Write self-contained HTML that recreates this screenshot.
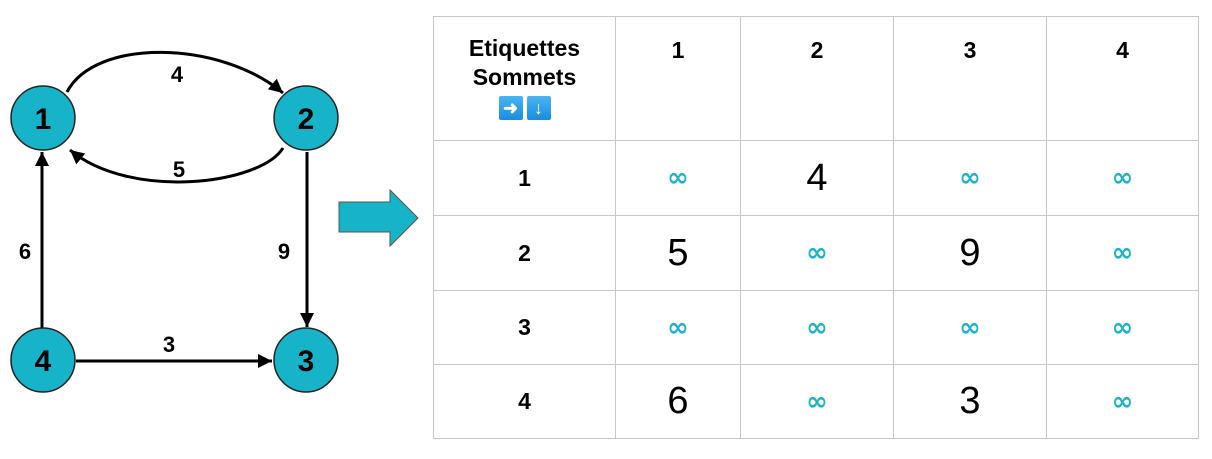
<!DOCTYPE html>
<html><head><style>
body{margin:0;width:1212px;height:459px;background:#fff;overflow:hidden;position:relative;font-family:"Liberation Sans",sans-serif}
svg{position:absolute;left:0;top:0}
.t{position:absolute;left:433px;top:16px;border-collapse:collapse}
.t td{border:1.5px solid #c8c8c8;text-align:center;padding:0}
.h{font-weight:bold;font-size:23px}
.i{color:#1bb3c9;font-size:26px;font-family:"DejaVu Sans",sans-serif;font-weight:bold}
.n{font-size:38px}
.b{display:inline-block;width:24px;height:24px;background:linear-gradient(#4ab4f0,#1a8de0);border-radius:2px;color:#fff;font-size:18px;line-height:24px;margin:2px}
</style></head><body>
<svg width="1212" height="459">
<defs>
<marker id="m" viewBox="0 0 10 10" markerWidth="14" markerHeight="14" refX="10" refY="5" orient="auto" markerUnits="userSpaceOnUse"><path d="M0,0L10,5L0,10z"/></marker></defs>
<g stroke="#000" stroke-width="3" fill="none">
<path d="M67,92 C95,38 220,40 283,93" marker-end="url(#m)"/>
<path d="M283,148 C260,185 130,200 70,150" marker-end="url(#m)"/>
<path d="M42,328 L42,152" marker-end="url(#m)"/>
<path d="M307,152 L307,327" marker-end="url(#m)"/>
<path d="M76,361 L272,361" marker-end="url(#m)"/>
</g>
<g fill="#17b3c8" stroke="#222" stroke-width="1.5">
<circle cx="43" cy="118" r="32"/><circle cx="306" cy="118" r="32"/>
<circle cx="43" cy="360" r="32"/><circle cx="306" cy="360" r="32"/>
</g>
<g font-family="Liberation Sans" font-weight="bold" text-anchor="middle">
<g font-size="30"><text x="43" y="129">1</text><text x="306" y="129">2</text><text x="43" y="371">4</text><text x="306" y="371">3</text></g>
<g font-size="22"><text x="177" y="82">4</text><text x="179" y="177">5</text><text x="25" y="259">6</text><text x="284" y="259">9</text><text x="169" y="352">3</text></g>
</g>
<path d="M339,202 L390,202 L390,190 L418,218 L390,246 L390,232 L339,232z" fill="#17b3c8" stroke="#555" stroke-width="1"/>
</svg>
<table class="t">
<tr style="height:124px"><td class="h" style="width:181px;vertical-align:top;padding-top:17px;line-height:29px">Etiquettes<br>Sommets<br><span class="b">➜</span><span class="b">↓</span></td><td class="h" style="width:124px;vertical-align:top;padding-top:20px">1</td><td class="h" style="width:152px;vertical-align:top;padding-top:20px">2</td><td class="h" style="width:152px;vertical-align:top;padding-top:20px">3</td><td class="h" style="width:151px;vertical-align:top;padding-top:20px">4</td></tr>
<tr style="height:75px"><td class="h">1</td><td class="i">∞</td><td class="n">4</td><td class="i">∞</td><td class="i">∞</td></tr>
<tr style="height:75px"><td class="h">2</td><td class="n">5</td><td class="i">∞</td><td class="n">9</td><td class="i">∞</td></tr>
<tr style="height:74px"><td class="h">3</td><td class="i">∞</td><td class="i">∞</td><td class="i">∞</td><td class="i">∞</td></tr>
<tr style="height:74px"><td class="h">4</td><td class="n">6</td><td class="i">∞</td><td class="n">3</td><td class="i">∞</td></tr>
</table>
</body></html>
